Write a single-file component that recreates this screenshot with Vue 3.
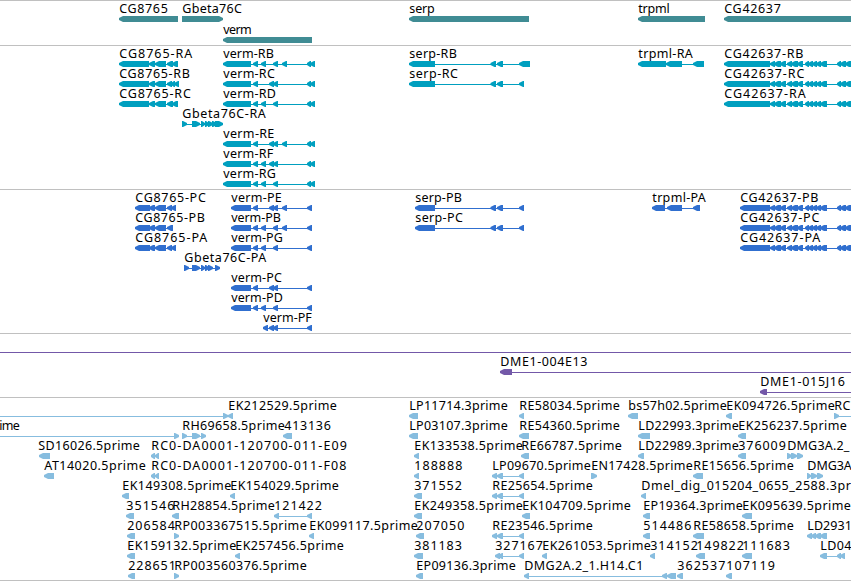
<template>
  <main class="browser">
    <section v-for="track in tracks" :key="track.name" class="track" :class="track.name">
      <svg class="track-canvas" width="851" :height="track.height">
        <g
          v-for="(row, r) in track.rows"
          :key="r"
          :transform="`translate(0 ${r * (track.pitch || 20)})`"
        >
          <g v-for="(f, i) in row" :key="i">
            <rect
              v-if="f.line"
              class="glyph"
              :x="f.line[0]"
              y="18"
              :width="f.line[1] - f.line[0]"
              height="1"
            />
            <polygon
              v-for="(e, n) in f.exons"
              :key="n"
              class="glyph"
              :points="arrow(e, f.right)"
            />
            <text
              v-if="f.label"
              class="label"
              :x="f.from"
              y="12"
              :textLength="f.to - f.from"
            >{{ f.label }}</text>
          </g>
        </g>
      </svg>
    </section>
  </main>
</template>

<script setup>
// a feature: label, label extent, exons [start, end], optional extras
function feat(label, from, to, exons, extra = {}) {
  const line = exons.length > 1 ? [exons[0][0], exons[exons.length - 1][1]] : null
  return { label, from: from + 0.3, to: to + 0.8, exons, line, ...extra }
}

const right = { right: true }

function arrow([a, b], toRight) {
  const head = Math.min(5, b - a) - 1
  if (toRight) {
    return `${a},15 ${b - head},15 ${b},17 ${b},19 ${b - head},21 ${a},21`
  }
  return `${b},15 ${a + head},15 ${a},17 ${a},19 ${a + head},21 ${b},21`
}

// exon groups shared by the isoforms
const cgMid = [[149, 155], [155, 166]]
const A = [253, 258]
const B = [261, 266]
const C = [269, 274]
const D = [273, 278]
const E = [282, 287]
const vermR = (...mid) => [[223, 251], ...mid, [307, 311], [310, 315]]
const vermP = (...mid) => [[231, 251], ...mid, [307, 312]]
const serpMid = [[490.5, 496], [497, 503]]
const longMid = [
  [770, 775], [774, 781], [780, 786], [787, 792], [791, 798], [797, 803],
  [805, 809], [808, 813], [812, 817], [816, 821], [820, 827],
  [837, 841], [840, 846], [845, 851]
]
const trio = [[492, 497], [497, 503], [519, 524]]

const tracks = [
  {
    name: 'gene',
    height: 44,
    pitch: 21,
    rows: [
      [
        feat('CG8765', 119, 167, [[119, 178]]),
        feat('Gbeta76C', 182, 241, [[182, 223]], right),
        feat('serp', 409, 434, [[409, 529]]),
        feat('trpml', 638, 669, [[638, 705]]),
        feat('CG42637', 724, 780, [[724, 860]])
      ],
      [feat('verm', 223, 251, [[223, 312]])]
    ]
  },
  {
    name: 'mrna',
    height: 143,
    rows: [
      [
        feat('CG8765-RA', 119, 191.5, [[119, 149], ...cgMid, [167, 173], [172, 178]]),
        feat('verm-RB', 223, 273, vermR(A, B, D, E)),
        feat('serp-RB', 409, 456, [[409, 435], ...serpMid, [519, 530]]),
        feat('trpml-RA', 638, 692, [[638, 666], [666, 682], [693, 704]]),
        feat('CG42637-RB', 724, 802.5, [[724, 770], ...longMid])
      ],
      [
        feat('CG8765-RB', 119, 189, [[119, 149], ...cgMid, [167, 172], [171, 175], [174, 179]]),
        feat('verm-RC', 223, 274, vermR(A, C, D)),
        feat('serp-RC', 409, 457, [[409, 435], ...serpMid, [519, 524]]),
        feat('CG42637-RC', 724, 803.5, [[724, 770], ...longMid])
      ],
      [
        feat('CG8765-RC', 119, 190, [[119, 149], ...cgMid, [167, 173], [172, 178]]),
        feat('verm-RD', 223, 275, vermR(A, B, D)),
        feat('CG42637-RA', 724, 805, [[724, 770], ...longMid])
      ],
      [
        feat('Gbeta76C-RA', 182, 265, [
          [182, 187], [192, 200], [201, 205], [205, 209], [208, 213], [212, 217], [215, 223]
        ], right)
      ],
      [feat('verm-RE', 223, 273.5, vermR(A, C, D, E))],
      [feat('verm-RF', 223, 272.5, vermR(A, B, C, D))],
      [feat('verm-RG', 223, 275, vermR(A, B, D))]
    ]
  },
  {
    name: 'protein',
    height: 143,
    rows: [
      [
        feat('CG8765-PC', 135, 205, [[135, 150], ...cgMid, [167, 172], [171, 176]]),
        feat('verm-PE', 231, 281, vermP(A, C, D, E)),
        feat('serp-PB', 415, 461, [[415, 435], ...serpMid, [519, 524]]),
        feat('trpml-PA', 652, 705, [[652, 665], [667, 682], [693, 700]]),
        feat('CG42637-PB', 740, 817.5, [[740, 770], ...longMid])
      ],
      [
        feat('CG8765-PB', 135, 204, [[135, 150], ...cgMid, [167, 173]]),
        feat('verm-PB', 231, 280, vermP(A, B, D, E)),
        feat('serp-PC', 415, 462, [[415, 435], ...serpMid, [519, 524]]),
        feat('CG42637-PC', 740, 818.5, [[740, 770], ...longMid])
      ],
      [
        feat('CG8765-PA', 135, 206.5, [[135, 150], ...cgMid, [167, 172], [171, 176]]),
        feat('verm-PG', 231, 282, vermP(A, B, D)),
        feat('CG42637-PA', 740, 819.5, [[740, 770], ...longMid])
      ],
      [
        feat('Gbeta76C-PA', 184, 265.5, [
          [184, 189], [192, 200], [201, 205], [205, 209], [208, 213], [215, 220]
        ], right)
      ],
      [feat('verm-PC', 231, 281, vermP(A, C, D))],
      [feat('verm-PD', 231, 282, vermP(A, B, D))],
      [feat('verm-PF', 263, 311, [[263, 268], C, D, [307, 312]])]
    ]
  },
  {
    name: 'clone',
    height: 63,
    rows: [
      [feat('', 0, 0, [], { line: [0, 851] })],
      [feat('DME1-004E13', 500, 586.5, [[500, 512]], { line: [505, 851] })],
      [feat('DME1-015J16', 760, 844, [[760, 767]], { line: [765, 851] })]
    ]
  },
  {
    name: 'est',
    height: 182,
    rows: [
      [
        feat('', 0, 0, [[223, 228]], { right: true, line: [0, 228] }),
        feat('EK212529.5prime', 228, 336, [[228, 233]]),
        feat('LP11714.3prime', 409, 507, [[409, 418]]),
        feat('RE58034.5prime', 519, 619, [[519, 524]]),
        feat('bs57h02.5prime', 628, 726, [[628, 638]]),
        feat('EK094726.5prime', 726, 834, [[726, 732]]),
        feat('RC', 834, 849.5, [[834, 839]], { right: true, line: [834, 851] })
      ],
      [
        feat('ime', -1, 19, [[174, 179]], { right: true, line: [0, 179] }),
        feat('RH69658.5prime', 182, 284, [[182, 187], [192, 200], [201, 206]], right),
        feat('413136', 284, 330, [[283, 292]]),
        feat('LP03107.3prime', 409, 507, [[409, 418]]),
        feat('RE54360.5prime', 519, 619, [[519, 529]]),
        feat('LD22993.3prime', 638, 738, [[638, 650]]),
        feat('EK256237.5prime', 738, 846, [[738, 746]])
      ],
      [
        feat('SD16026.5prime', 38, 139, [[39, 50]]),
        feat('RC0-DA0001-120700-011-E09', 151, 346, [[151, 155], [155, 159]]),
        feat('EK133538.5prime', 414, 522, [[414, 419]]),
        feat('RE66787.5prime', 521, 621, [[521, 529]]),
        feat('LD22989.3prime', 638, 738, [[638, 644]]),
        feat('376009', 738, 785, [[738, 746]]),
        feat('DMG3A.2_', 787, 848.5, [[787, 792], [791, 797], [797, 803]], right)
      ],
      [
        feat('AT14020.5prime', 44, 145, [[44, 54]]),
        feat('RC0-DA0001-120700-011-F08', 151, 345.5, [[151, 155], [155, 159]]),
        feat('188888', 414, 461.5, [[414, 419]]),
        feat('LP09670.5prime', 492, 590, trio),
        feat('EN17428.5prime', 591, 692, [[591, 597]], right),
        feat('RE15656.5prime', 693, 793, [[693, 703]]),
        feat('DMG3A', 807, 851, [[807, 811], [811, 817], [817, 823]], right)
      ],
      [
        feat('EK149308.5prime', 122, 230.5, [[122, 129]]),
        feat('EK154029.5prime', 230, 338, [[230, 235]]),
        feat('371552', 414, 461, [[414, 422]]),
        feat('RE25654.5prime', 492, 592, trio),
        feat('Dmel_dig_015204_0655_2588.3pr', 641, 850, [[641, 646]])
      ],
      [
        feat('351546', 126, 173.5, [[126, 134]]),
        feat('RH28854.5prime', 172, 274, [[172, 179]]),
        feat('121422', 274, 321, [[274, 279], [307, 312]]),
        feat('EK249358.5prime', 414, 522, [[414, 422]]),
        feat('EK104709.5prime', 522, 630, [[522, 530]]),
        feat('EP19364.3prime', 643, 742, [[643, 650]]),
        feat('EK095639.5prime', 742, 850, [[742, 752]])
      ],
      [
        feat('206584', 127, 174, [[127, 135]]),
        feat('RP003367515.5prime', 174, 306, [[174, 179]], right),
        feat('EK099117.5prime', 309, 417, [[309, 314]]),
        feat('207050', 416, 463.5, [[416, 424]]),
        feat('RE23546.5prime', 492, 592, trio),
        feat('514486', 643, 690.5, [[643, 650]]),
        feat('RE58658.5prime', 693, 793, [[693, 704]]),
        feat('LD2931', 807, 851, [[807, 812], [811, 816], [815, 821], [820, 827]])
      ],
      [
        feat('EK159132.5prime', 127, 235.5, [[127, 135]]),
        feat('EK257456.5prime', 235, 343, [[235, 240]]),
        feat('381183', 414, 461, [[414, 423]]),
        feat('327167', 495, 542, [[495, 500], [498, 503], [519, 524]]),
        feat('EK261053.5prime', 542, 650, [[542, 547]]),
        feat('314152', 650, 697, [[650, 655]]),
        feat('149822', 696, 743, [[696, 705]]),
        feat('111683', 742, 789, [[742, 752]]),
        feat('LD04', 820, 850.5, [[820, 827], [837, 841], [840, 845]])
      ],
      [
        feat('228651', 128, 175, [[128, 135]]),
        feat('RP003560376.5prime', 174, 306, [[174, 179]], right),
        feat('EP09136.3prime', 416, 515, [[416, 423]]),
        feat('DMG2A.2_1.H14.C1', 524, 642.5, [[524, 529], [662, 667], [667, 676]]),
        feat('362537', 677, 724.5, [[677, 683]]),
        feat('107119', 726, 774, [[726, 732]])
      ]
    ]
  }
]
</script>

<style>
body {
  margin: 0;
  background: #ffffff;
}
</style>

<style scoped>
.browser {
  display: flex;
  flex-direction: column;
  width: 851px;
  height: 581px;
  overflow: hidden;
  box-sizing: border-box;
  border-bottom: 1px solid #c0c0c0;
  background: #ffffff;
}

.track {
  border-top: 1px solid #c0c0c0;
}
.track-canvas {
  display: block;
}

.label {
  font-family: 'Noto Sans', 'Open Sans', sans-serif;
  font-size: 12.5px;
  fill: #000000;
}

.gene .glyph { fill: #408c94; }
.mrna .glyph { fill: #009fbf; }
.protein .glyph { fill: #306fcf; }
.clone .glyph { fill: #7358a8; }
.est .glyph { fill: #87bddf; }
</style>
